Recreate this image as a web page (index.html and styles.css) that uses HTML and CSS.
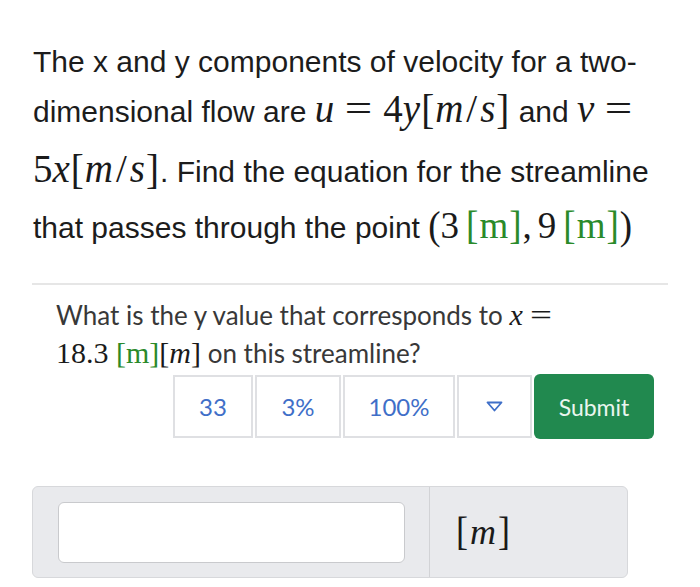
FILE: index.html
```html
<!DOCTYPE html>
<html lang="en">
<head>
<meta charset="utf-8">
<title>Streamline question</title>
<link rel="stylesheet" href="styles.css">
</head>
<body>
<div class="page">
  <div class="stem">
    <div class="ln l1">The x and y components of velocity for a two-</div>
    <div class="ln l2">dimensional flow are <span class="m"><i>u</i><span class="rel">=</span>4<i>y</i><span class="br">[</span><i>m</i><span class="sl">/</span><i>s</i><span class="br">]</span></span> and <span class="m"><i>v</i><span class="rel">=</span></span></div>
    <div class="ln l3"><span class="m">5<i>x</i><span class="br">[</span><i>m</i><span class="sl">/</span><i>s</i><span class="br">]</span></span>. Find the equation for the streamline</div>
    <div class="ln l4">that passes through the point <span class="m m4"><span class="pr">(</span>3<span class="sp"></span><span class="g"><span class="br">[</span>m<span class="br">]</span></span>,<span class="sp"></span>9<span class="sp"></span><span class="g"><span class="br">[</span>m<span class="br">]</span></span><span class="pr">)</span></span></div>
  </div>
  <div class="rule"></div>
  <div class="part">
    <p class="q">What is the y value that corresponds to <span class="m2"><i>x</i><span class="rel2">=</span></span><br><span class="m2">18.3 <span class="g">[m]</span>[<i>m</i>]</span> on this streamline?</p>
    <div class="controls">
      <div class="cell c1">33</div>
      <div class="cell c2">3%</div>
      <div class="cell c3">100%</div>
      <div class="cell c4"><svg class="tri" width="17" height="11" viewBox="0 0 17 11"><polygon points="1.5,1.5 15.5,1.5 8.5,9.5" fill="none" stroke="#3f6fc8" stroke-width="1.8" stroke-linejoin="round"/></svg></div>
      <button class="submit" type="button">Submit</button>
    </div>
  </div>
  <div class="answer">
    <div class="field"><div class="input"></div></div>
    <div class="unit"><span class="ubr">[</span><i>m</i><span class="ubr">]</span></div>
  </div>
</div>
</body>
</html>
```
FILE: styles.css
```css
html, body {
  margin: 0;
  padding: 0;
  background: #ffffff;
}

.page {
  padding: 37px 0 0 32px;
}

.stem {
  font-family: "Liberation Sans", Arial, sans-serif;
  font-size: 30px;
  color: #1c1c1c;
  padding-left: 1px;
}

.ln {
  line-height: 50px;
  white-space: nowrap;
}

.l3 { margin-top: 10px; }
.l4 { margin-top: 6px; }

.m {
  font-family: "Liberation Serif", "Times New Roman", serif;
  font-size: 39px;
  line-height: 1;
  color: #1a1a1a;
}

.m4 {
  font-size: 37px;
}

.m i {
  font-style: italic;
}

.rel {
  display: inline-block;
  width: 27px;
  margin: 0 11px;
  text-align: center;
  transform: scaleX(1.25);
}

.br {
  display: inline-block;
  transform: scaleY(1.1);
  margin: 0 1px;
}

.sl {
  margin: 0 3px;
}

.pr {
  display: inline-block;
  transform: scaleY(1.08);
}

.sp {
  display: inline-block;
  width: 6px;
}

.g {
  color: #2a8a2a;
}

.rule {
  margin: 30px 32px 0 0;
  height: 2px;
  background: #e6e6e6;
}

.part {
  padding-left: 24px;
  padding-top: 11px;
}

.q {
  margin: 0;
  font-family: Lato, "Open Sans", sans-serif;
  font-size: 26px;
  line-height: 37px;
  color: #383838;
}

.m2 {
  font-family: "Liberation Serif", "Times New Roman", serif;
  font-size: 30px;
  color: #1a1a1a;
}

.m2 i {
  font-style: italic;
}

.rel2 {
  display: inline-block;
  width: 22px;
  margin: 0 7px;
  text-align: center;
  transform: scaleX(1.3);
}

.controls {
  display: flex;
  justify-content: flex-end;
  align-items: center;
  gap: 2px;
  margin-top: 2px;
  padding-right: 46px;
}

.cell {
  box-sizing: border-box;
  height: 63px;
  border: 2px solid #dfe0e3;
  display: flex;
  align-items: center;
  justify-content: center;
  font-family: Lato, "Open Sans", sans-serif;
  font-size: 24px;
  color: #3f6fc8;
  background: #ffffff;
}

.c1 { width: 80px; }
.c2 { width: 86px; }
.c3 { width: 112px; }
.c4 { width: 75px; }

.tri {
  display: block;
}

.submit {
  box-sizing: border-box;
  width: 120px;
  height: 65px;
  border: none;
  border-radius: 6px;
  background: #21894f;
  color: #eaf6ee;
  font-family: Lato, "Open Sans", sans-serif;
  font-size: 23px;
  font-weight: 400;
  padding: 0;
}

.answer {
  box-sizing: border-box;
  display: flex;
  width: 596px;
  height: 92px;
  margin-top: 47px;
  background: #e9eaed;
  border: 1px solid #d7d8db;
  border-radius: 6px;
}

.field {
  box-sizing: border-box;
  width: 397px;
  padding: 15px 24px 14px 25px;
  border-right: 1px solid #d2d3d6;
}

.input {
  height: 100%;
  box-sizing: border-box;
  background: #ffffff;
  border: 1px solid #c9cacd;
  border-radius: 6px;
}

.unit {
  display: flex;
  align-items: center;
  padding-left: 26px;
  font-family: "Liberation Serif", "Times New Roman", serif;
  font-size: 36px;
  color: #1a1a1a;
}

.unit i {
  font-style: italic;
  margin: 0 2px;
}

.ubr {
  display: inline-block;
  transform: scaleY(1.1);
}
```
